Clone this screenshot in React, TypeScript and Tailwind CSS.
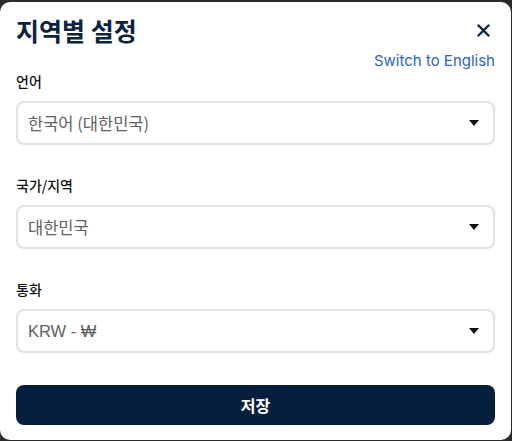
import React from 'react';

const KR = { fontFamily: '"Noto Sans CJK KR", "Noto Sans", sans-serif' };

const Caret: React.FC = () => (
    <svg width="10" height="6" viewBox="0 0 10 6" className="shrink-0">
        <path d="M0 0 H10 L5 6 Z" fill="#111" />
    </svg>
);

interface FieldProps {
    label: string;
    value: string;
    latin?: boolean;
}

const Field: React.FC<FieldProps> = ({ label, value, latin }) => (
    <div className="flex flex-col">
        <label className="text-[14px] leading-[16px] font-medium text-[#111]" style={KR}>{label}</label>
        <div className="mt-3 h-[44px] flex items-center justify-between pl-[10px] pr-[14px] border-2 border-[#e2e2e2] rounded-lg bg-white">
            <span
                className="text-[16.5px] text-[#616161]"
                style={latin ? { fontFamily: '"Liberation Sans", "Noto Sans CJK KR", sans-serif' } : KR}
            >
                {value}
            </span>
            <Caret />
        </div>
    </div>
);

export default function App() {
    return (
        <div className="w-[512px] h-[441px] bg-[#2b2b2b] pt-[2px] overflow-hidden">
            <div className="w-[511px] h-[438px] bg-white rounded-[10px] px-4 pt-[11px] flex flex-col">
                <div className="flex items-center justify-between h-[34px]">
                    <h3 className="text-[25px] leading-[34px] font-bold text-[#0b2340]" style={KR}>지역별 설정</h3>
                    <button className="w-[20px] h-[20px] flex items-center justify-center mr-[2px]">
                        <svg width="13" height="13" viewBox="0 0 13 13">
                            <path d="M1.5 1.5 L11.5 11.5 M11.5 1.5 L1.5 11.5" stroke="#0b2340" strokeWidth="2.4" strokeLinecap="round" />
                        </svg>
                    </button>
                </div>
                <div className="flex justify-end mt-[4px]">
                    <span className="text-[15px] leading-[20px] text-[#2f62c8]" style={{ fontFamily: 'Inter, "Noto Sans", sans-serif' }}>
                        Switch to English
                    </span>
                </div>
                <div className="mt-[2px] flex flex-col gap-8">
                    <Field label="언어" value="한국어 (대한민국)" />
                    <Field label="국가/지역" value="대한민국" />
                    <Field label="통화" value="KRW - ₩" latin />
                    <button
                        className="h-[40px] w-full bg-[#061f3c] rounded-lg text-white text-[16px] font-bold"
                        style={KR}
                    >
                        저장
                    </button>
                </div>
            </div>
        </div>
    );
}
